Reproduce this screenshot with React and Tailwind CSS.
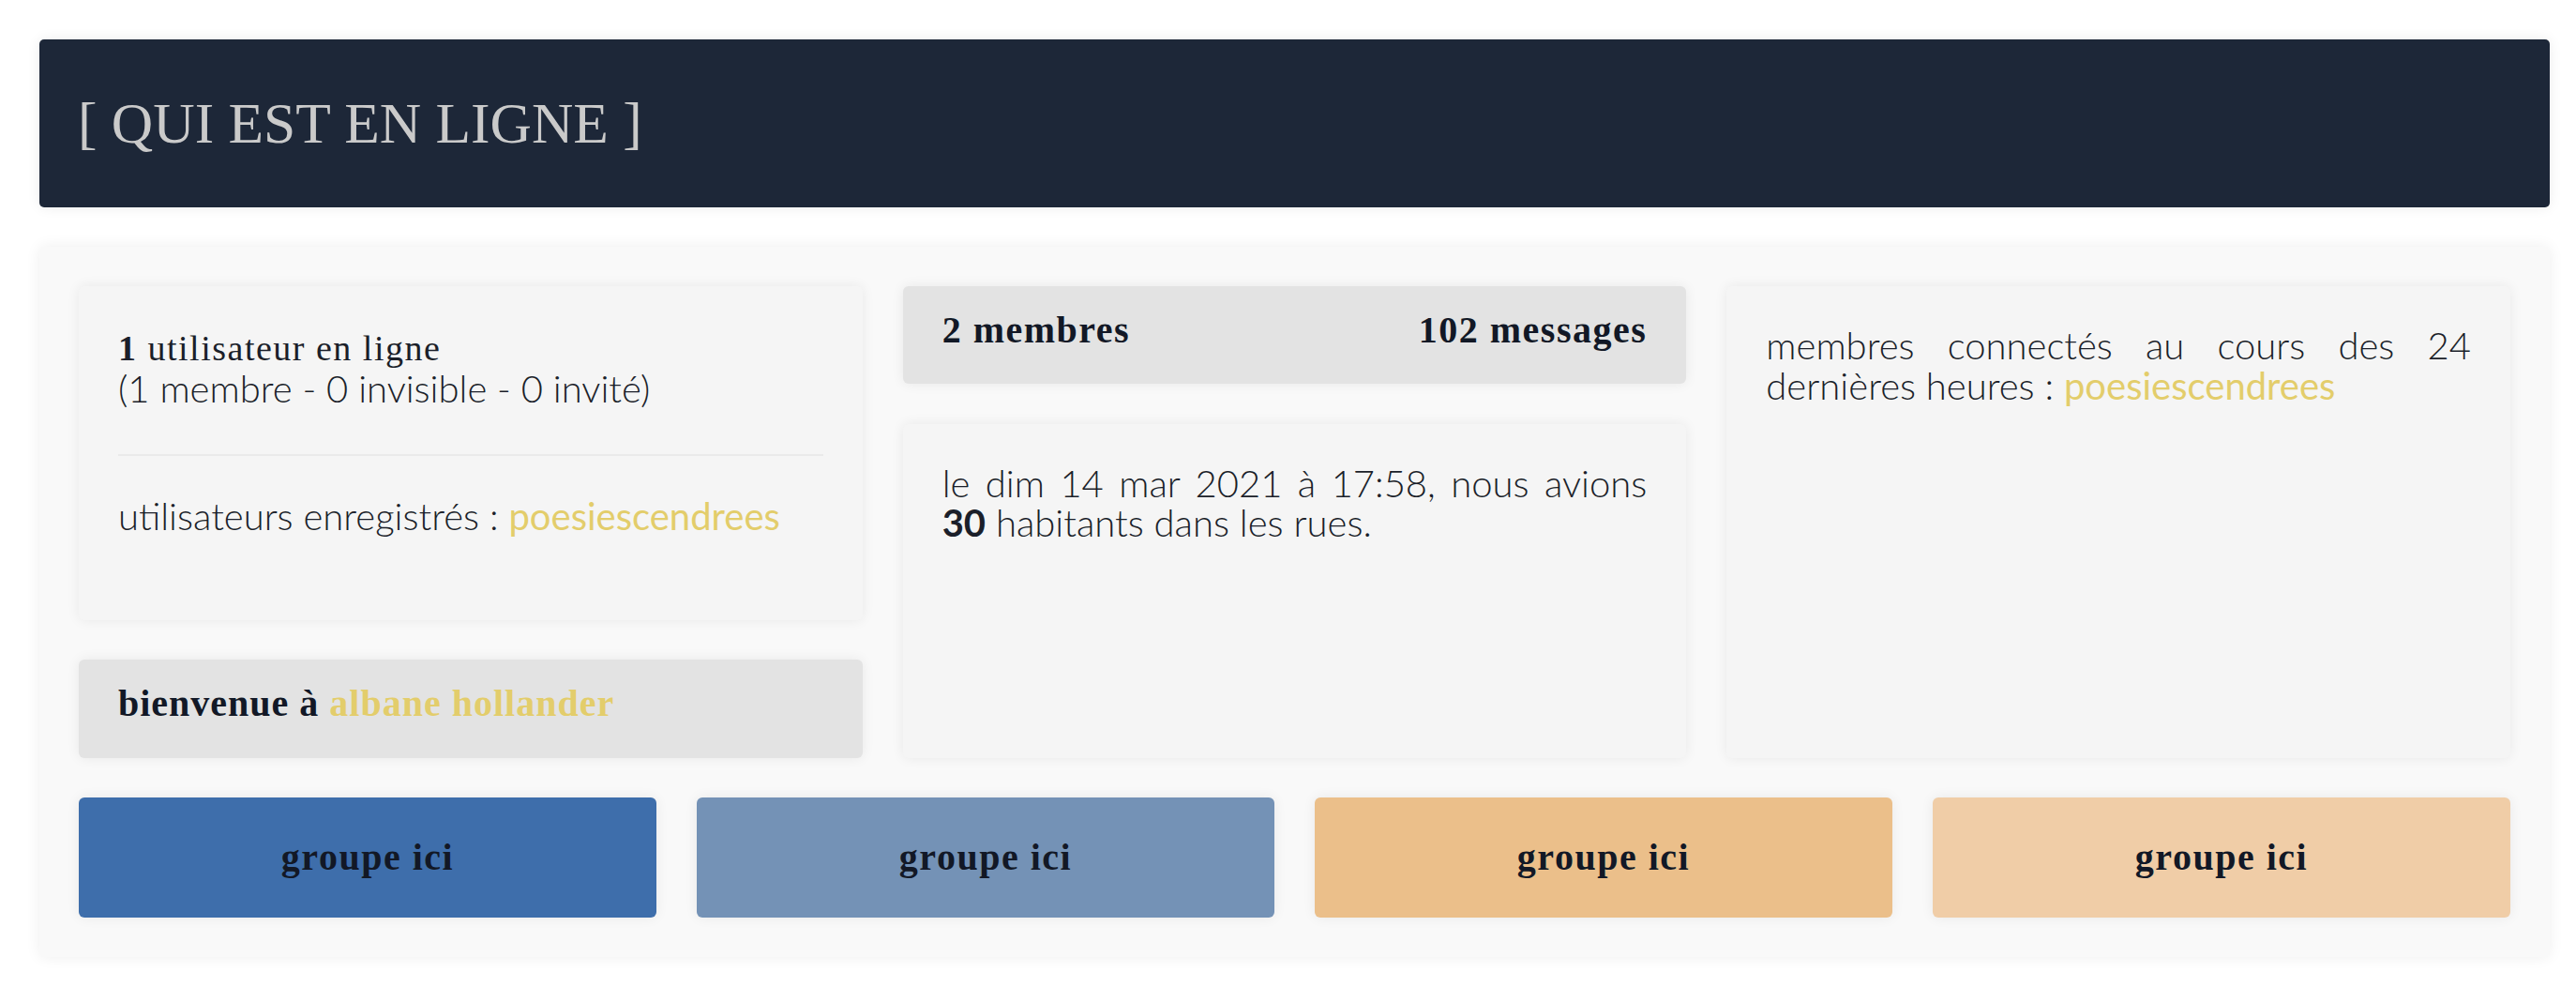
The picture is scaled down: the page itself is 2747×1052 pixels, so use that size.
import React from 'react';

const serif = "font-['Liberation_Serif',serif]";
const sans = "font-['Lato',sans-serif] font-light";

const GROUPS = [
  { label: 'groupe ici', color: 'bg-[#3e6eab]' },
  { label: 'groupe ici', color: 'bg-[#7492b6]' },
  { label: 'groupe ici', color: 'bg-[#ebbf8a]' },
  { label: 'groupe ici', color: 'bg-[#f0cda7]' },
];

const Card = ({ className = '', children }) => (
  <div
    className={`rounded-[6px] shadow-[0_0_14px_rgba(0,0,0,0.07)] ${className}`}
  >
    {children}
  </div>
);

export default function App() {
  return (
    <div className="bg-white pt-[42px] pl-[42px] pr-[28px] pb-[28px] text-[#1b1f2a]">
      {/* titre */}
      <div className="flex h-[179px] items-center rounded-[5px] bg-[#1d2738] pl-[41px] shadow-[0_0_14px_rgba(0,0,0,0.08)]">
        <h1 className={`${serif} text-[61.5px] leading-none text-[#cacaca]`}>
          [ QUI EST EN LIGNE ]
        </h1>
      </div>

      <div className="mt-[42px] rounded-[5px] bg-[#f9f9f9] p-[42px] shadow-[0_0_16px_rgba(0,0,0,0.07)]">
        <div className="grid grid-cols-3 gap-[43px]">
          {/* colonne gauche */}
          <div className="flex flex-col gap-[42px]">
            <Card className="h-[356px] bg-[#f5f5f5] px-[42px] pt-[45px]">
              <p className={`${serif} text-[38px] leading-[43px] tracking-[1.5px]`}>
                <span className="font-bold">1</span> utilisateur en ligne
              </p>
              <p className={`${sans} text-[40px] leading-[42px]`}>
                (1 membre - 0 invisible - 0 invité)
              </p>
              <div className="mt-[49px] h-[2px] bg-[#eaeaea]" />
              <p className={`${sans} mt-[44px] text-[40px] leading-[40px]`}>
                utilisateurs enregistrés :{' '}
                <span className="font-normal text-[#e3cd6b]">poesiescendrees</span>
              </p>
            </Card>
            <Card className="h-[105px] bg-[#e3e3e3] px-[42px] pt-[27px]">
              <p className={`${serif} text-[40px] font-bold leading-[40px] tracking-[1px] text-[#121826]`}>
                bienvenue à <span className="text-[#e3cd6b]">albane hollander</span>
              </p>
            </Card>
          </div>

          {/* colonne centrale */}
          <div className="flex flex-col gap-[43px]">
            <Card className="flex h-[104px] justify-between bg-[#e3e3e3] px-[42px] pt-[27px]">
              <span className={`${serif} text-[40px] font-bold leading-[40px] tracking-[1.5px] text-[#121826]`}>
                2 membres
              </span>
              <span className={`${serif} text-[40px] font-bold leading-[40px] tracking-[1.5px] text-[#121826]`}>
                102 messages
              </span>
            </Card>
            <Card className="flex-1 bg-[#f5f5f5] px-[42px] pt-[42px]">
              <p className={`${sans} text-justify text-[40px] leading-[42px]`}>
                le dim 14 mar 2021 à 17:58, nous avions{' '}
                <span className="font-bold">30</span> habitants dans les rues.
              </p>
            </Card>
          </div>

          {/* colonne droite */}
          <Card className="bg-[#f5f5f5] px-[42px] pt-[42px]">
            <p className={`${sans} text-justify text-[40px] leading-[43px]`}>
              membres connectés au cours des 24 dernières heures :{' '}
              <span className="font-normal text-[#e3cd6b]">poesiescendrees</span>
            </p>
          </Card>
        </div>

        {/* groupes */}
        <div className="mt-[42px] grid grid-cols-4 gap-[43px]">
          {GROUPS.map((g, i) => (
            <div
              key={i}
              className={`flex h-[128px] items-center justify-center rounded-[6px] ${g.color} shadow-[0_0_14px_rgba(0,0,0,0.07)]`}
            >
              <span className={`${serif} text-[40px] font-bold leading-none tracking-[1.5px] text-[#121826]`}>
                {g.label}
              </span>
            </div>
          ))}
        </div>
      </div>
    </div>
  );
}
